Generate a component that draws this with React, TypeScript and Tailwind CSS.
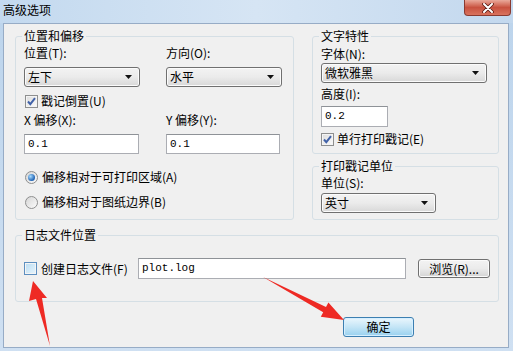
import React from 'react';

const cjk = "font-['Noto_Sans_CJK_SC','Noto_Sans',sans-serif]";
const mono = "font-['Liberation_Mono',monospace] text-[11px]";

function Combo({ value, width }: { value: string; width: string }) {
  return (
    <div
      className={`${width} h-[20px] flex items-center justify-between rounded-[3px] border border-[#707070] bg-gradient-to-b from-[#f3f3f3] via-[#ebebeb] to-[#d8d8d8] pl-[3px] pr-[7px] shadow-[inset_0_0_0_1px_#fbfbfb]`}
    >
      <span className="leading-[14px]">{value}</span>
      <svg width="7" height="4" viewBox="0 0 7 4">
        <path d="M0 0h7L3.5 4z" fill="#111" />
      </svg>
    </div>
  );
}

function TextBox({ value, width, height = 'h-[20px]' }: { value: string; width: string; height?: string }) {
  return (
    <div
      className={`${width} ${height} flex items-center bg-white border border-[#abadb3] border-t-[#8e9297] pl-[3px] ${mono}`}
    >
      {value}
    </div>
  );
}

function Check({ checked, hover }: { checked?: boolean; hover?: boolean }) {
  return (
    <span
      className={`w-[13px] h-[13px] shrink-0 flex items-center justify-center border ${
        hover
          ? 'border-[#5d8fc0] bg-gradient-to-br from-[#b9dcf2] to-[#e8f5fc]'
          : 'border-[#8e8f8f] bg-gradient-to-br from-[#dcdcdc] to-[#fbfbfb]'
      } shadow-[inset_0_0_0_1px_#f4f4f4]`}
    >
      {checked && (
        <svg width="9" height="9" viewBox="0 0 9 9">
          <path d="M1 4.5l2.3 2.6L8 1.2" fill="none" stroke="#4162a8" strokeWidth="2" />
        </svg>
      )}
    </span>
  );
}

function Radio({ selected }: { selected?: boolean }) {
  return (
    <span className="w-[13px] h-[13px] shrink-0 rounded-full border border-[#8e8f8f] bg-gradient-to-br from-[#d6d6d6] to-[#fbfbfb] flex items-center justify-center">
      {selected && (
        <span className="w-[7px] h-[7px] rounded-full bg-[radial-gradient(circle_at_35%_35%,#a8dcff,#1f62b3_70%)]" />
      )}
    </span>
  );
}

function Group({ title, className, children }: { title: string; className: string; children: React.ReactNode }) {
  return (
    <fieldset className={`border border-[#d5dfe5] rounded-[3px] px-[8px] ${className}`}>
      <legend className="-ml-[2px] px-[2px] leading-[14px]">{title}</legend>
      <div className="flex flex-col">{children}</div>
    </fieldset>
  );
}

export default function App() {
  return (
    <div
      className={`relative w-[513px] h-[351px] overflow-hidden flex flex-col bg-gradient-to-b from-[#bcd4ec] to-[#cfe0f2] text-[12px] text-black ${cjk}`}
    >
      {/* Title bar */}
      <div className="h-[23px] shrink-0 flex items-start justify-between bg-gradient-to-r from-[#c3d9ef] via-[#d6e5f4] to-[#c3d8ee]">
        <span className="pl-[3px] pt-[3px] leading-[14px]">高级选项</span>
        <div className="mr-[2px] w-[47px] h-[16px] rounded-b-[4px] border border-t-0 border-[#8a3a30] bg-gradient-to-b from-[#e9a99b] via-[#c8513f] to-[#d9735e] flex items-center justify-center">
          <svg width="12" height="10" viewBox="0 0 12 10">
            <path d="M2 1l8 8M10 1l-8 8" stroke="#5a1a12" strokeWidth="3.6" strokeLinecap="round" />
            <path d="M2 1l8 8M10 1l-8 8" stroke="#fff" strokeWidth="2" strokeLinecap="round" />
          </svg>
        </div>
      </div>

      {/* Client area */}
      <div className="ml-[3px] mr-[4px] mb-[3px] flex-1 bg-[#f0f0f0] border border-[#97acc6] pl-[11px] pr-[9px] pt-[5px] flex flex-col">
        <div className="flex gap-[18px] items-start">
          {/* 位置和偏移 */}
          <Group title="位置和偏移" className="w-[279px] h-[191px]">
            <div className="grid grid-cols-[142px_1fr] mt-[3px] leading-[14px]">
              <span>位置(T):</span>
              <span>方向(O):</span>
            </div>
            <div className="grid grid-cols-[142px_1fr] mt-[7px]">
              <Combo value="左下" width="w-[116px]" />
              <Combo value="水平" width="w-[116px]" />
            </div>
            <div className="flex items-center gap-[3px] mt-[7px] ml-[1px] h-[14px] leading-[14px]">
              <Check checked />
              <span>戳记倒置(U)</span>
            </div>
            <div className="grid grid-cols-[142px_1fr] mt-[5px] leading-[14px]">
              <span>X 偏移(X):</span>
              <span>Y 偏移(Y):</span>
            </div>
            <div className="grid grid-cols-[142px_1fr] mt-[7px]">
              <TextBox value="0.1" width="w-[115px]" />
              <TextBox value="0.1" width="w-[114px]" />
            </div>
            <div className="flex items-center gap-[4px] mt-[16px] ml-[1px] h-[14px] leading-[14px]">
              <Radio selected />
              <span>偏移相对于可打印区域(A)</span>
            </div>
            <div className="flex items-center gap-[4px] mt-[11px] ml-[1px] h-[14px] leading-[14px]">
              <Radio />
              <span>偏移相对于图纸边界(B)</span>
            </div>
          </Group>

          <div className="flex-1 flex flex-col gap-[5px]">
            {/* 文字特性 */}
            <Group title="文字特性" className="h-[125px]">
              <span className="mt-[4px] leading-[14px]">字体(N):</span>
              <div className="mt-[2px]">
                <Combo value="微软雅黑" width="w-[166px]" />
              </div>
              <span className="mt-[4px] leading-[14px]">高度(I):</span>
              <div className="mt-[5px]">
                <TextBox value="0.2" width="w-[67px]" height="h-[21px]" />
              </div>
              <div className="flex items-center gap-[3px] mt-[5px] h-[14px] leading-[14px]">
                <Check checked />
                <span>单行打印戳记(E)</span>
              </div>
            </Group>

            {/* 打印戳记单位 */}
            <Group title="打印戳记单位" className="h-[61px]">
              <span className="mt-[3px] leading-[13px]">单位(S):</span>
              <div className="mt-[4px]">
                <Combo value="英寸" width="w-[115px]" />
              </div>
            </Group>
          </div>
        </div>

        {/* 日志文件位置 */}
        <Group title="日志文件位置" className="mt-[8px] h-[74px]">
          <div className="grid grid-cols-[114px_268px_1fr] items-center mt-[16px]">
            <div className="flex items-center gap-[4px] leading-[14px]">
              <Check hover />
              <span>创建日志文件(F)</span>
            </div>
            <TextBox value="plot.log" width="w-[268px]" height="h-[21px]" />
            <button className="ml-[12px] w-[72px] h-[19px] rounded-[3px] border border-[#707070] bg-gradient-to-b from-[#f3f3f3] via-[#ebebeb] to-[#d4d4d4] shadow-[inset_0_0_0_1px_#fbfbfb] leading-[14px] flex items-center justify-center">
              浏览(R)...
            </button>
          </div>
        </Group>

        <div className="flex mt-[15px] pl-[328px]">
          <button className="w-[71px] h-[20px] rounded-[3px] border border-[#3c7fb1] bg-gradient-to-b from-[#eaf6fd] via-[#c4e5f6] to-[#98d1ef] shadow-[inset_0_0_0_1px_#d6efff] leading-[14px] flex items-center justify-center">
            确定
          </button>
        </div>
      </div>

      {/* Red annotation arrows */}
      <svg className="absolute inset-0 pointer-events-none" width="513" height="351" viewBox="0 0 513 351">
        <polygon points="33,281 47,298 42,298 50,346 36,299 29,301" fill="#ee2a24" />
        <polygon points="263,277 326,307 328.4,302.6 344,320 320.8,316.8 323.2,312.3" fill="#ee2a24" />
      </svg>
    </div>
  );
}
